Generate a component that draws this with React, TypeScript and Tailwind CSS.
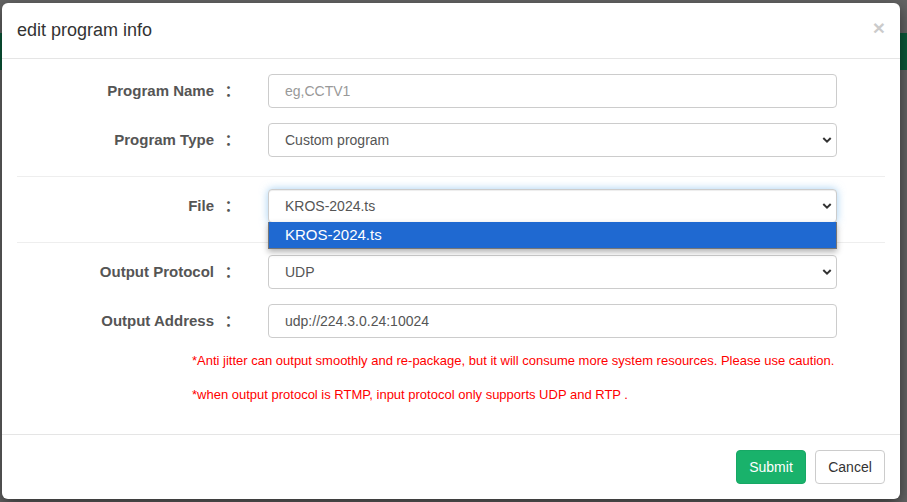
import { useState } from 'react';

const font = "font-['Liberation_Sans','Noto_Sans_CJK_SC',sans-serif]";

function Chevron() {
  return (
    <svg
      className="pointer-events-none absolute right-[5px] top-1/2 -translate-y-1/2"
      width="10"
      height="7"
      viewBox="0 0 10 7"
      fill="none"
    >
      <path d="M1.3 1.5 5 5.1 8.7 1.5" stroke="#333" strokeWidth="2" />
    </svg>
  );
}

function Row({ label, children, className = '' }: { label: string; children: React.ReactNode; className?: string }) {
  return (
    <div className={`flex h-[34px] items-center ${className}`}>
      <label className="flex w-[219px] items-center justify-end text-[15px] font-bold text-[#555]">
        <span>{label}</span>
        <span className="ml-[7px] inline-block w-[15px] text-center font-['Noto_Sans_CJK_JP',sans-serif]">：</span>
      </label>
      <div className="relative ml-[32px] w-[569px]">{children}</div>
    </div>
  );
}

const field =
  'block h-[34px] w-full rounded-[4px] border border-[#ccc] bg-white pl-[16px] pr-[24px] text-[14px] text-[#555] outline-none appearance-none';

export default function App() {
  const [name, setName] = useState('');

  return (
    <div className={`relative h-[502px] w-[907px] overflow-hidden bg-[#646464] ${font}`}>
      {/* page behind the backdrop */}
      <div className="mt-[33px] h-[37px] bg-[#0b5a3a]" />

      <div className="absolute left-[2px] top-[3px] w-[898px] rounded-[6px] bg-white shadow-[0_5px_15px_rgba(0,0,0,0.5)]">
        {/* header */}
        <div className="flex h-[56px] items-center justify-between border-b border-[#e5e5e5] px-[15px]">
          <h4 className="text-[18px] leading-[25px] text-[#333]">edit program info</h4>
          <button className="-mt-[7px] text-[21px] font-bold leading-none text-[#000] opacity-20">×</button>
        </div>

        {/* body */}
        <div className="px-[15px] pb-[30px] pt-[15px]">
          <Row label="Program Name" className="mb-[15px]">
            <input
              className={`${field} placeholder:text-[#999]`}
              placeholder="eg,CCTV1"
              value={name}
              onChange={(e) => setName(e.target.value)}
            />
          </Row>
          <Row label="Program Type">
            <select className={field} defaultValue="custom">
              <option value="custom">Custom program</option>
            </select>
            <Chevron />
          </Row>

          <hr className="mb-[12px] mt-[19px] border-t border-[#eee]" />

          <Row label="File">
            <select
              className={`${field} border-[#66afe9] shadow-[inset_0_1px_1px_rgba(0,0,0,0.075),0_0_8px_rgba(102,175,233,0.6)]`}
              defaultValue="kros"
            >
              <option value="kros">KROS-2024.ts</option>
            </select>
            <Chevron />
            {/* open option list */}
            <div className="absolute left-0 top-[33px] z-10 h-[27px] w-full border border-t-0 border-[#767676] bg-[#1f69d1] pl-[16px] text-[15px] leading-[26px] text-white shadow-[0_3px_6px_rgba(0,0,0,0.3)]">
              KROS-2024.ts
            </div>
          </Row>

          <hr className="mb-[12px] mt-[19px] border-t border-[#eee]" />

          <Row label="Output Protocol" className="mb-[15px]">
            <select className={field} defaultValue="udp">
              <option value="udp">UDP</option>
            </select>
            <Chevron />
          </Row>
          <Row label="Output Address">
            <input className={field} defaultValue="udp://224.3.0.24:10024" />
          </Row>

          <p className="mt-[14px] pl-[175px] text-[13px] leading-[18px] text-[#ff0000]">
            *Anti jitter can output smoothly and re-package, but it will consume more system resources. Please use caution.
          </p>
          <p className="mt-[16px] pl-[175px] text-[13px] leading-[18px] text-[#ff0000]">
            *when output protocol is RTMP, input protocol only supports UDP and RTP .
          </p>
        </div>

        {/* footer */}
        <div className="flex justify-end gap-[9px] border-t border-[#e5e5e5] p-[15px]">
          <button className="h-[34px] w-[70px] rounded-[4px] border border-[#17a865] bg-[#19b26b] text-[14px] text-white">
            Submit
          </button>
          <button className="h-[34px] w-[70px] rounded-[4px] border border-[#ccc] bg-white text-[14px] text-[#333]">
            Cancel
          </button>
        </div>
      </div>
    </div>
  );
}
